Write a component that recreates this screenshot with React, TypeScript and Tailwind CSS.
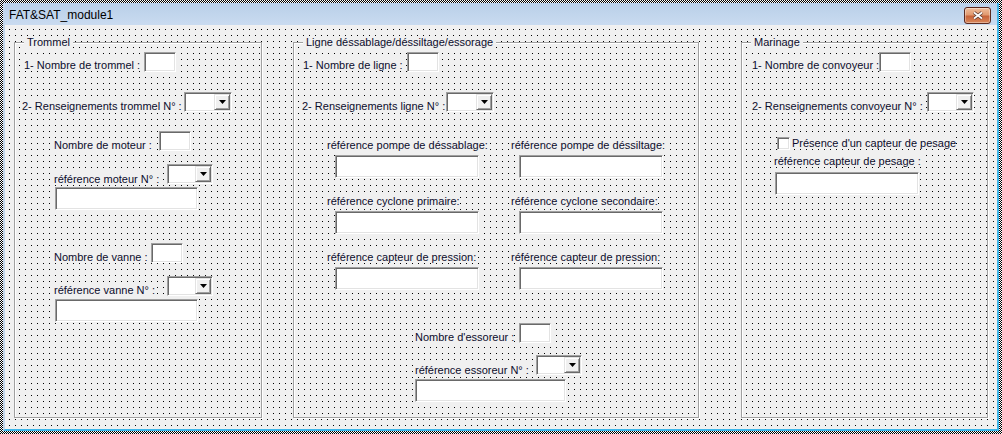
import React from 'react';

const dots =
  'bg-[#f0f0f0] bg-[image:conic-gradient(at_1px_1px,transparent_75%,#000_0)] bg-[length:6px_6px] bg-[position:4px_4px]';

const sunken =
  'box-border bg-white border border-[#a0a0a0] border-r-white border-b-white shadow-[inset_1px_1px_0_#696969,inset_-1px_-1px_0_#e3e3e3]';

function Label({ className = '', children }: { className?: string; children: React.ReactNode }) {
  return (
    <div className={`leading-[13px] whitespace-nowrap ${className}`}>
      <span className="bg-[#f0f0f0]">{children}</span>
    </div>
  );
}

function TextBox({ className = '' }: { className?: string }) {
  return <div className={`${sunken} ${className}`} />;
}

function Combo({ className = '' }: { className?: string }) {
  return (
    <div className={`${sunken} h-[20px] p-[1px] flex justify-end ${className}`}>
      <div className="w-[16px] h-full box-border bg-[#f0f0f0] border border-[#e3e3e3] border-r-[#696969] border-b-[#696969] shadow-[inset_1px_1px_0_#fff,inset_-1px_-1px_0_#a0a0a0] flex items-center justify-center">
        <svg width="7" height="4" viewBox="0 0 7 4">
          <path d="M0 0h7L3.5 4z" fill="#000" />
        </svg>
      </div>
    </div>
  );
}

function Frame({
  title,
  className = '',
  children,
}: {
  title: string;
  className?: string;
  children: React.ReactNode;
}) {
  return (
    <div
      className={`relative h-[376px] box-border border border-[#a0a0a0] shadow-[1px_1px_0_#fff,inset_1px_1px_0_#fff] ${dots} ${className}`}
    >
      <div className="absolute -top-[7px] left-[9px] px-[3px] bg-[#f0f0f0] leading-[13px] whitespace-nowrap">
        {title}
      </div>
      {children}
    </div>
  );
}

export default function App() {
  return (
    <div className="w-[1002px] h-[434px] p-[3px] box-border bg-[image:repeating-conic-gradient(#000_0_25%,#fff_0_50%)] bg-[length:2px_2px] font-['Liberation_Sans',Arial,sans-serif] text-[11px] text-[#0c0c2c]">
      <div className="w-[996px] h-[428px] box-border border-l-2 border-l-[#c2d5ea] border-r-2 border-b-2 border-r-[#3fb7ea] border-b-[#3fb7ea] flex flex-col">
        {/* title bar */}
        <div className="h-[22px] flex justify-between bg-[linear-gradient(#b9cfe8,#c9dbf0)]">
          <div className="pl-[4px] pt-[5px] text-[12px] text-black leading-[14px]">
            FAT&amp;SAT_module1
          </div>
          <div className="mt-[4px] mr-[6px] w-[27px] h-[17px] box-border rounded-[3px] border border-[#5b2a20] bg-[linear-gradient(#eebd9c,#e29a70_45%,#c8643a_55%,#d9875a)] shadow-[inset_0_0_0_1px_rgba(255,255,255,0.35)] flex items-center justify-center">
            <svg width="12" height="9" viewBox="0 0 12 9">
              <path d="M2 1.5l8 6M10 1.5l-8 6" stroke="#5a3a30" strokeWidth="3.4" />
              <path d="M2 1.5l8 6M10 1.5l-8 6" stroke="#fff" strokeWidth="1.7" />
            </svg>
          </div>
        </div>

        {/* client area */}
        <div className={`flex-1 flex items-start pl-[9px] pt-[17px] ${dots}`}>
          <Frame title="Trommel" className="w-[248px]">
            <div className="flex items-start h-[20px] mt-[9px] ml-[9px]">
              <Label className="w-[120px] mt-[7px]">1- Nombre de trommel :</Label>
              <TextBox className="w-[32px] h-[20px]" />
            </div>
            <div className="flex items-start h-[20px] mt-[20px] ml-[7px]">
              <Label className="w-[162px] mt-[8px]">2- Renseignements trommel N° :</Label>
              <Combo className="w-[48px]" />
            </div>
            <div className="flex items-start h-[20px] mt-[19px] ml-[39px]">
              <Label className="w-[105px] mt-[8px]">Nombre de moteur :</Label>
              <TextBox className="w-[32px] h-[20px]" />
            </div>
            <div className="flex items-start h-[20px] mt-[13px] ml-[39px]">
              <Label className="w-[113px] mt-[9px]">référence moteur N° :</Label>
              <Combo className="w-[46px]" />
            </div>
            <TextBox className="mt-[3px] ml-[40px] w-[143px] h-[23px]" />
            <div className="flex items-start h-[20px] mt-[33px] ml-[39px]">
              <Label className="w-[97px] mt-[8px]">Nombre de vanne :</Label>
              <TextBox className="w-[32px] h-[20px]" />
            </div>
            <div className="flex items-start h-[20px] mt-[13px] ml-[39px]">
              <Label className="w-[113px] mt-[8px]">référence vanne N° :</Label>
              <Combo className="w-[46px]" />
            </div>
            <TextBox className="mt-[3px] ml-[40px] w-[143px] h-[23px]" />
          </Frame>

          <Frame title="Ligne déssablage/déssiltage/essorage" className="w-[406px] ml-[31px]">
            <div className="flex items-start h-[20px] mt-[9px] ml-[9px]">
              <Label className="w-[104px] mt-[7px]">1- Nombre de ligne :</Label>
              <TextBox className="w-[32px] h-[20px]" />
            </div>
            <div className="flex items-start h-[20px] mt-[20px] ml-[8px]">
              <Label className="w-[144px] mt-[8px]">2- Renseignements ligne N° :</Label>
              <Combo className="w-[48px]" />
            </div>
            <div className="grid grid-cols-[184px_184px] gap-y-[17px] mt-[27px] ml-[33px]">
              {[
                'référence pompe de déssablage:',
                'référence pompe de déssiltage:',
                'référence cyclone primaire:',
                'référence cyclone secondaire:',
                'référence capteur de pression:',
                'référence capteur de pression:',
              ].map((t, i) => (
                <div key={i}>
                  <Label>{t}</Label>
                  <TextBox className="mt-[3px] ml-[8px] w-[144px] h-[23px]" />
                </div>
              ))}
            </div>
            <div className="flex items-start h-[20px] mt-[33px] ml-[121px]">
              <Label className="w-[104px] mt-[8px]">Nombre d'essoreur :</Label>
              <TextBox className="w-[32px] h-[20px]" />
            </div>
            <div className="flex items-start h-[20px] mt-[12px] ml-[121px]">
              <Label className="w-[121px] mt-[9px]">référence essoreur N° :</Label>
              <Combo className="w-[46px]" />
            </div>
            <TextBox className="mt-[4px] ml-[121px] w-[151px] h-[23px]" />
          </Frame>

          <Frame title="Marinage" className="w-[247px] ml-[42px]">
            <div className="flex items-start h-[20px] mt-[9px] ml-[10px]">
              <Label className="w-[127px] mt-[7px]">1- Nombre de convoyeur :</Label>
              <TextBox className="w-[32px] h-[20px]" />
            </div>
            <div className="flex items-start h-[20px] mt-[20px] ml-[10px]">
              <Label className="w-[175px] mt-[8px]">2- Renseignements convoyeur N° :</Label>
              <Combo className="w-[47px]" />
            </div>
            <div className="flex items-center gap-[2px] mt-[25px] ml-[35px]">
              <div className={`${sunken} w-[13px] h-[13px]`} />
              <Label>Présence d'un capteur de pesage</Label>
            </div>
            <Label className="mt-[5px] ml-[32px]">référence capteur de pesage :</Label>
            <TextBox className="mt-[4px] ml-[33px] w-[144px] h-[23px]" />
          </Frame>
        </div>
      </div>
    </div>
  );
}
